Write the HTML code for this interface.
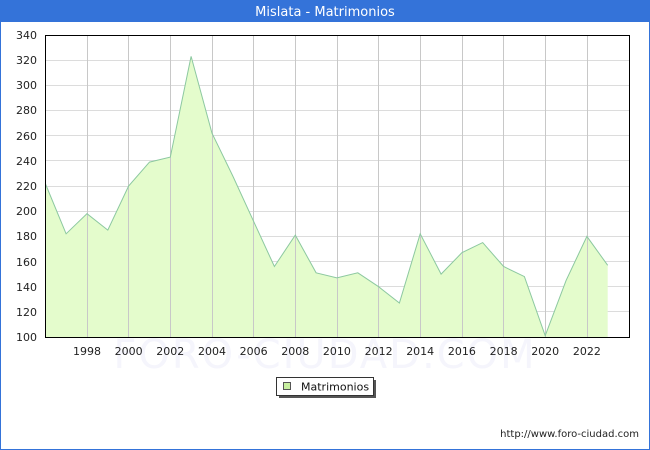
<!DOCTYPE html>
<html><head><meta charset="utf-8"><style>
html,body{margin:0;padding:0;background:#fff}
body{width:650px;height:450px;position:relative;overflow:hidden;font-family:"DejaVu Sans","Liberation Sans",sans-serif}
</style></head><body>
<svg width="650" height="450" xmlns="http://www.w3.org/2000/svg" style="position:absolute;left:0;top:0">
<rect x="0.5" y="0.5" width="649" height="449" fill="#fff" stroke="#3473d9"/>
<rect x="0" y="0" width="650" height="22" fill="#3473d9"/>
<text x="325" y="16" fill="#fff" font-size="13" text-anchor="middle" font-family="DejaVu Sans, sans-serif">Mislata - Matrimonios</text>
<text x="325" y="368" fill="#f5f5fc" font-size="40" text-anchor="middle" font-family="DejaVu Sans, sans-serif" letter-spacing="2">FORO-CIUDAD.COM</text>
<g stroke="#dcdcdc" stroke-width="1">
<line x1="45" y1="60.5" x2="630" y2="60.5"/><line x1="45" y1="85.5" x2="630" y2="85.5"/><line x1="45" y1="110.5" x2="630" y2="110.5"/><line x1="45" y1="135.5" x2="630" y2="135.5"/><line x1="45" y1="160.5" x2="630" y2="160.5"/><line x1="45" y1="186.5" x2="630" y2="186.5"/><line x1="45" y1="211.5" x2="630" y2="211.5"/><line x1="45" y1="236.5" x2="630" y2="236.5"/><line x1="45" y1="261.5" x2="630" y2="261.5"/><line x1="45" y1="286.5" x2="630" y2="286.5"/><line x1="45" y1="311.5" x2="630" y2="311.5"/>
</g>
<polygon fill="#e4fccc" points="45.3,337 45.3,183.5 66.1,233.8 87,213.7 107.8,230.1 128.6,186 149.5,162.1 170.3,157.1 191.1,56.4 212,133.2 232.8,176 253.6,221.3 274.4,266.5 295.3,235.1 316.1,272.8 336.9,277.9 357.8,272.8 378.6,286.7 399.4,303 420.2,233.8 441.1,274.1 461.9,252.7 482.7,242.6 503.6,266.5 524.4,276.6 545.2,335.7 566.1,280.4 586.9,236.4 607.7,265.3 607.7,337"/>
<g stroke="#c8c8c8" stroke-width="1">
<line x1="87.5" y1="35" x2="87.5" y2="337"/><line x1="128.5" y1="35" x2="128.5" y2="337"/><line x1="170.5" y1="35" x2="170.5" y2="337"/><line x1="212.5" y1="35" x2="212.5" y2="337"/><line x1="253.5" y1="35" x2="253.5" y2="337"/><line x1="295.5" y1="35" x2="295.5" y2="337"/><line x1="337.5" y1="35" x2="337.5" y2="337"/><line x1="378.5" y1="35" x2="378.5" y2="337"/><line x1="420.5" y1="35" x2="420.5" y2="337"/><line x1="462.5" y1="35" x2="462.5" y2="337"/><line x1="503.5" y1="35" x2="503.5" y2="337"/><line x1="545.5" y1="35" x2="545.5" y2="337"/><line x1="587.5" y1="35" x2="587.5" y2="337"/>
</g>
<polyline fill="none" stroke="#8cc8a0" stroke-width="1" points="45.3,183.5 66.1,233.8 87,213.7 107.8,230.1 128.6,186 149.5,162.1 170.3,157.1 191.1,56.4 212,133.2 232.8,176 253.6,221.3 274.4,266.5 295.3,235.1 316.1,272.8 336.9,277.9 357.8,272.8 378.6,286.7 399.4,303 420.2,233.8 441.1,274.1 461.9,252.7 482.7,242.6 503.6,266.5 524.4,276.6 545.2,335.7 566.1,280.4 586.9,236.4 607.7,265.3"/>
<rect x="45.5" y="35.5" width="584" height="302" fill="none" stroke="#000"/>
<g font-size="11" fill="#222" text-anchor="end">
<text x="37" y="39">340</text><text x="37" y="64">320</text><text x="37" y="89">300</text><text x="37" y="114">280</text><text x="37" y="140">260</text><text x="37" y="165">240</text><text x="37" y="190">220</text><text x="37" y="215">200</text><text x="37" y="240">180</text><text x="37" y="266">160</text><text x="37" y="291">140</text><text x="37" y="316">120</text><text x="37" y="341">100</text>
</g>
<g font-size="11" fill="#222" text-anchor="middle">
<text x="87" y="355">1998</text><text x="128.6" y="355">2000</text><text x="170.3" y="355">2002</text><text x="212" y="355">2004</text><text x="253.6" y="355">2006</text><text x="295.3" y="355">2008</text><text x="336.9" y="355">2010</text><text x="378.6" y="355">2012</text><text x="420.2" y="355">2014</text><text x="461.9" y="355">2016</text><text x="503.6" y="355">2018</text><text x="545.2" y="355">2020</text><text x="586.9" y="355">2022</text>
</g>
<rect x="279" y="380" width="97" height="18" fill="#555"/>
<rect x="276.5" y="377.5" width="97" height="18" fill="#fff" stroke="#333"/>
<rect x="283.5" y="382.5" width="7" height="7" fill="#c8f0a0" stroke="#555"/>
<text x="301" y="390.5" font-size="11" fill="#111">Matrimonios</text>
<text x="639" y="437" font-size="10" fill="#222" text-anchor="end">http://www.foro-ciudad.com</text>
</svg>
</body></html>
